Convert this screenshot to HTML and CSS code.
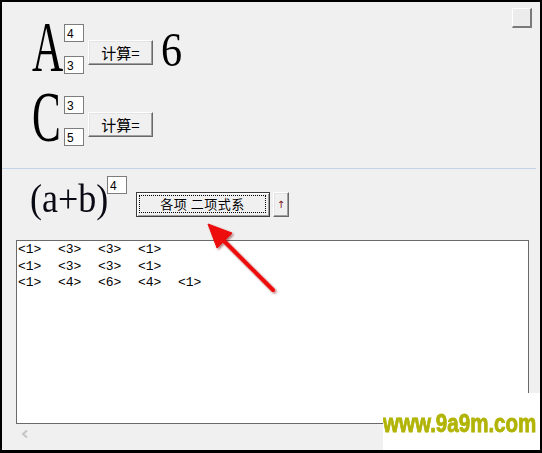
FILE: index.html
```html
<!DOCTYPE html>
<html lang="zh">
<head>
<meta charset="utf-8">
<title>二项式系数</title>
<link rel="stylesheet" href="styles.css">
</head>
<body>
<div class="window">
  <section class="top">
    <div class="formulas">
      <div class="row row-a">
        <span class="letter">A</span>
        <div class="pair pair-a">
          <input class="num" value="4">
          <input class="num" value="3">
        </div>
        <button class="btn calc calc-a">计算=</button>
        <span class="result">6</span>
      </div>
      <div class="row row-c">
        <span class="letter">C</span>
        <div class="pair pair-c">
          <input class="num" value="3">
          <input class="num" value="5">
        </div>
        <button class="btn calc calc-c">计算=</button>
      </div>
    </div>
    <div class="corner"></div>
  </section>

  <section class="bottom">
    <div class="binom">
      <span class="expr">(a+b)</span>
      <input class="num sup" value="4">
      <button class="btn default"><span class="focus">各项 二项式系</span></button>
      <button class="btn up">↑</button>
    </div>
    <div class="output">
      <div class="line"><span>&lt;1&gt;</span><span>&lt;3&gt;</span><span>&lt;3&gt;</span><span>&lt;1&gt;</span></div>
      <div class="line"><span>&lt;1&gt;</span><span>&lt;3&gt;</span><span>&lt;3&gt;</span><span>&lt;1&gt;</span></div>
      <div class="line"><span>&lt;1&gt;</span><span>&lt;4&gt;</span><span>&lt;6&gt;</span><span>&lt;4&gt;</span><span>&lt;1&gt;</span></div>
    </div>
    <div class="hscroll">
      <svg class="chevron" width="8" height="8" viewBox="0 0 8 8"><path d="M6 0.5 L2 4 L6 7.5" fill="none" stroke="#c4c4c4" stroke-width="2"/></svg>
    </div>
  </section>

  <!-- red callout arrow pointing at the coefficient button -->
  <svg class="pointer" width="90" height="90" viewBox="198 216 90 90">
    <defs>
      <filter id="shade" x="-20%" y="-20%" width="140%" height="140%">
        <feDropShadow dx="1.5" dy="1.5" stdDeviation="1" flood-color="#7a0000" flood-opacity="0.55"/>
      </filter>
    </defs>
    <g filter="url(#shade)" fill="#ee1111" stroke="#ee1111">
      <line x1="273" y1="290" x2="221" y2="238" stroke-width="4" stroke-linecap="round"/>
      <polygon points="208,224 232,233 217,248" stroke-width="1" stroke-linejoin="round"/>
    </g>
  </svg>

  <div class="watermark"><span>www.9a9m.com</span></div>
</div>
</body>
</html>
```

FILE: styles.css
```css
html, body {
  margin: 0;
  padding: 0;
  background: #f0f0f0;
}

.window {
  position: relative;
  box-sizing: border-box;
  width: 542px;
  height: 453px;
  border: 2px solid #000;
  border-bottom-width: 3px;
  background: #f0f0f0;
  overflow: hidden;
  font-family: "Liberation Serif", serif;
}

/* ---------- upper panel: A / C formulas ---------- */
.top {
  display: flex;
  justify-content: space-between;
  height: 166px;
  margin-right: 4px;
  border-bottom: 1px solid #c3d4e6;
}

.formulas {
  display: flex;
  flex-direction: column;
  gap: 14px;
  padding: 17px 0 0 30px;
}

.row {
  display: flex;
  align-items: flex-start;
  height: 56px;
}

.letter {
  flex: none;
  width: 32px;
  font-size: 72px;
  line-height: 56px;
  white-space: nowrap;
  color: #000;
  transform: scaleX(0.6);
  transform-origin: left center;
}

.pair {
  display: flex;
  flex-direction: column;
  gap: 14px;
}
.pair-a { margin-top: 5px; }
.pair-c { margin-top: 7px; }

.num {
  box-sizing: border-box;
  width: 20px;
  height: 18px;
  margin: 0;
  padding: 1px 0 0 2px;
  border: 1px solid #7d7d7d;
  background: #fff;
  color: #000;
  font-family: "Liberation Sans", sans-serif;
  font-size: 12px;
  line-height: 14px;
  outline: none;
}

.btn {
  box-sizing: border-box;
  margin: 0;
  padding: 0;
  background: #f0f0f0;
  color: #000;
  border: 1px solid;
  border-color: #ffffff #696969 #696969 #ffffff;
  box-shadow: inset -1px -1px 0 #a0a0a0, inset 1px 1px 0 #e3e3e3;
  font-family: "Noto Sans CJK SC", sans-serif;
}

.calc {
  width: 65px;
  height: 25px;
  margin-left: 4px;
  font-size: 15px;
  line-height: 20px;
}
.calc-a { margin-top: 21px; }
.calc-c { margin-top: 23px; }

.result {
  flex: none;
  margin: 7px 0 0 8px;
  font-size: 48px;
  line-height: 48px;
  transform: scaleX(0.88);
  transform-origin: left center;
}

.corner {
  flex: none;
  box-sizing: border-box;
  width: 20px;
  height: 20px;
  margin: 6px 4px 0 0;
  background: #ececec;
  border-style: solid;
  border-width: 1px 2px 2px 1px;
  border-color: #ffffff #7a7a7a #7a7a7a #ffffff;
}

/* ---------- lower panel: binomial expansion ---------- */
.bottom {
  display: flex;
  flex-direction: column;
  padding-top: 7px;
}

.binom {
  display: flex;
  align-items: flex-start;
  height: 44px;
  padding-left: 28px;
}

.expr {
  flex: none;
  width: 77px;
  margin-top: 3px;
  font-size: 40px;
  line-height: 40px;
  white-space: nowrap;
  color: #0a0a14;
  transform: scaleX(0.9);
  transform-origin: left center;
}

.sup { flex: none; }

.default {
  display: flex;
  width: 134px;
  height: 25px;
  margin: 16px 0 0 9px;
  padding: 2px 3px 3px 2px;
  border-color: #3c3c3c;
  box-shadow: inset 1px 1px 0 #ffffff, inset -1px -1px 0 #a0a0a0;
}

.focus {
  flex: 1;
  border: 1px dotted #000;
  font-size: 13px;
  line-height: 16px;
  text-align: center;
  letter-spacing: 0.5px;
}

.up {
  width: 16px;
  height: 25px;
  margin: 16px 0 0 3px;
  color: #7e1420;
  font-family: "DejaVu Sans", sans-serif;
  font-size: 10px;
  line-height: 20px;
}

.output {
  box-sizing: border-box;
  width: 513px;
  height: 184px;
  margin: 20px 0 0 14px;
  padding: 1px 1px;
  background: #fff;
  border: 1px solid #6a6a6a;
  font-family: "Liberation Mono", monospace;
  font-size: 13px;
  line-height: 16.5px;
  color: #000;
}

.line span {
  display: inline-block;
  width: 40px;
}

.hscroll {
  display: flex;
  padding: 6px 0 0 19px;
}

.chevron { display: block; }

/* ---------- overlays ---------- */
.pointer {
  position: absolute;
  left: 196px;
  top: 214px;
  pointer-events: none;
}

.watermark {
  position: absolute;
  right: -2px;
  bottom: -3px;
  width: 159px;
  height: 60px;
  box-sizing: border-box;
  padding-top: 17px;
  background: #fff;
  overflow: hidden;
}

.watermark span {
  display: block;
  white-space: nowrap;
  font-family: "Liberation Sans", sans-serif;
  font-weight: bold;
  font-size: 26px;
  line-height: 26px;
  color: #b1b406;
  -webkit-text-stroke: 0.9px #b1b406;
  transform: scaleX(0.79);
  transform-origin: left center;
}
```
